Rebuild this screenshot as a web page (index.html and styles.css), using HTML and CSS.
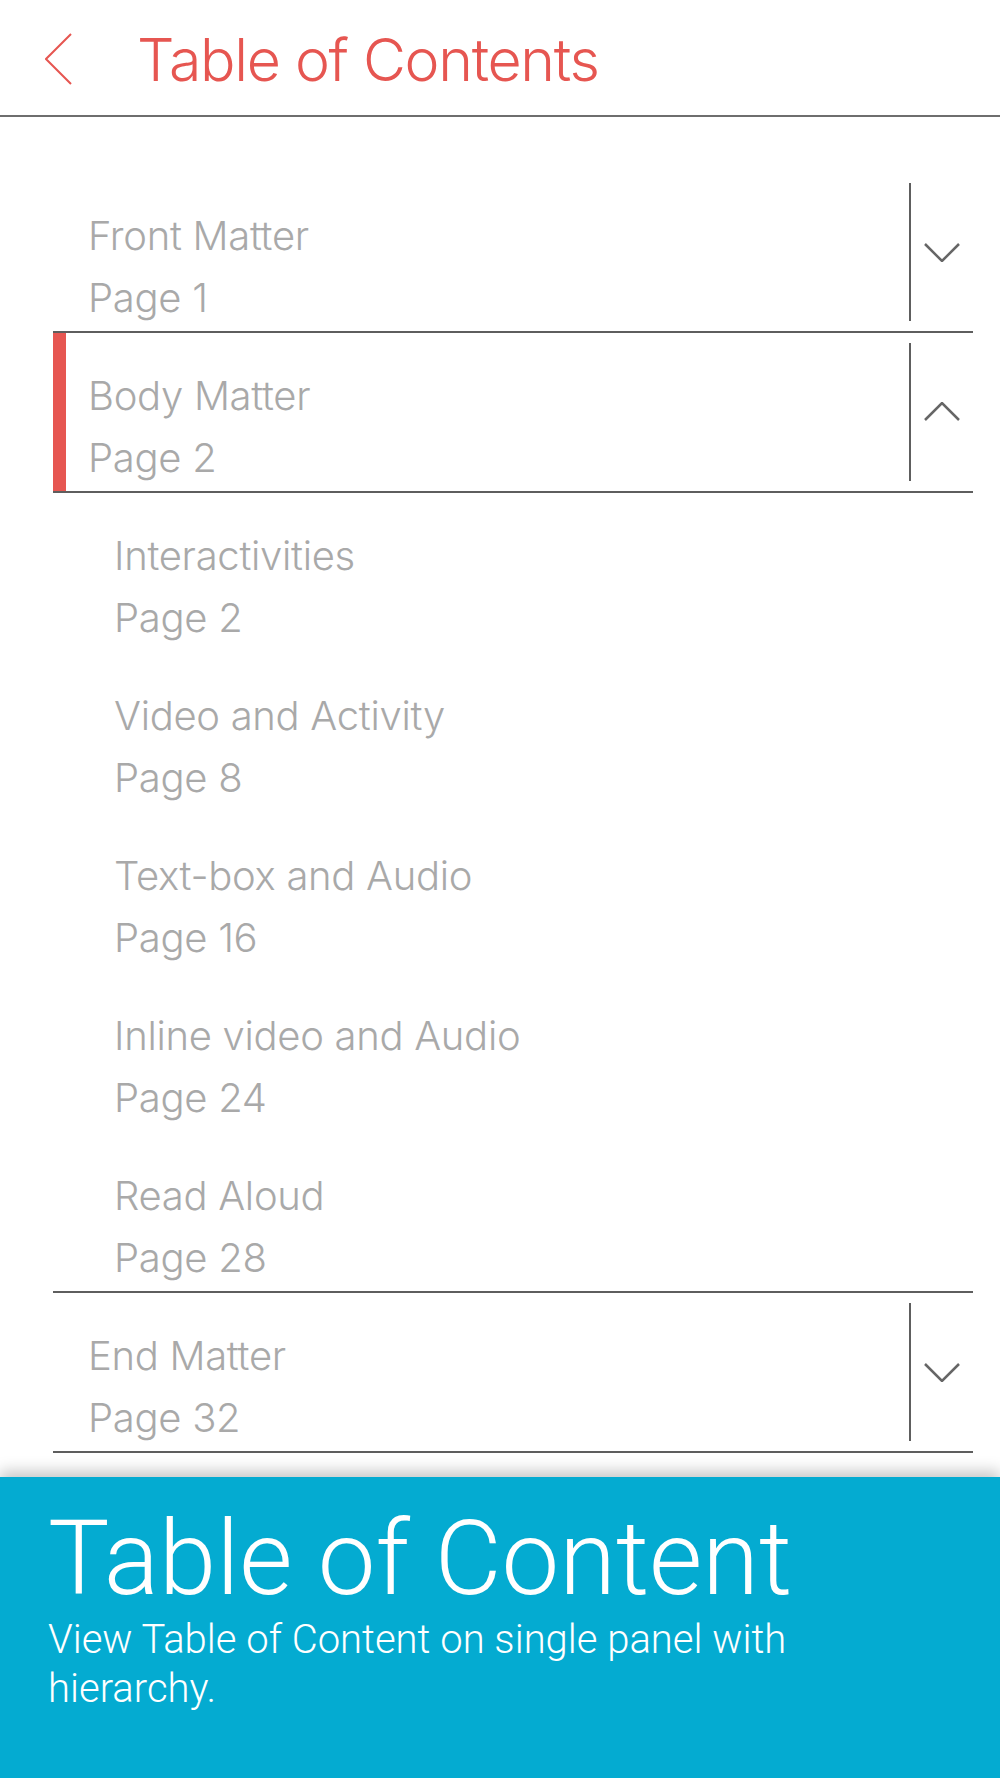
FILE: index.html
```html
<!DOCTYPE html>
<html>

<head>
    <title>Table of Contents</title>
    <meta charset="utf-8">
    <meta name="viewport" content="width=device-width, initial-scale=1.0">
    <link rel="stylesheet" href="styles.css">
</head>

<body>
    <header class="topbar">
        <svg class="tilbage" width="28" height="52" viewBox="0 0 28 52">
            <polyline points="26,1 1,26 26,51" />
        </svg>
        <h1>Table of Contents</h1>
    </header>

    <section class="toc">
        <div class="raekke">
            <div class="tekst">
                <p>Front Matter</p>
                <p>Page 1</p>
            </div>
            <button class="fold">
                <svg width="36" height="20" viewBox="0 0 36 20"><polyline points="1,2 18,19 35,2" /></svg>
            </button>
        </div>

        <div class="raekke aktiv">
            <div class="tekst">
                <p>Body Matter</p>
                <p>Page 2</p>
            </div>
            <button class="fold">
                <svg width="36" height="20" viewBox="0 0 36 20"><polyline points="1,18 18,1 35,18" /></svg>
            </button>
        </div>

        <ul class="under">
            <li>
                <p>Interactivities</p>
                <p>Page 2</p>
            </li>
            <li>
                <p>Video and Activity</p>
                <p>Page 8</p>
            </li>
            <li>
                <p>Text-box and Audio</p>
                <p>Page 16</p>
            </li>
            <li>
                <p>Inline video and Audio</p>
                <p>Page 24</p>
            </li>
            <li>
                <p>Read Aloud</p>
                <p>Page 28</p>
            </li>
        </ul>

        <div class="raekke">
            <div class="tekst">
                <p>End Matter</p>
                <p>Page 32</p>
            </div>
            <button class="fold">
                <svg width="36" height="20" viewBox="0 0 36 20"><polyline points="1,2 18,19 35,2" /></svg>
            </button>
        </div>
    </section>

    <footer class="info">
        <h2>Table of Content</h2>
        <p>View Table of Content on single panel with hierarchy.</p>
    </footer>
</body></html>
```

FILE: styles.css
```css
body {
    margin: 0;
    background: white;
    font-family: Inter, "Liberation Sans", Arial, sans-serif;
    font-weight: 300;
}

p {
    margin: 0;
}

.topbar {
    display: flex;
    align-items: flex-start;
    height: 117px;
    box-sizing: border-box;
    padding-top: 30px;
    border-bottom: 2px solid #6e6e6e;
}

.tilbage {
    margin-top: 3px;
    margin-left: 45px;
}

.tilbage polyline {
    fill: none;
    stroke: #e65651;
    stroke-width: 2;
}

h1 {
    margin: 0 0 0 64px;
    font-size: 59px;
    line-height: 60px;
    font-weight: 300;
    letter-spacing: -1.3px;
    color: #e65651;
}

.toc {
    margin: 56px 27px 0 53px;
}

.raekke {
    display: flex;
    align-items: center;
    height: 160px;
    box-sizing: border-box;
    border-bottom: 2px solid #5e5e5e;
}

.aktiv {
    box-shadow: inset 13px 0 #e65651;
}

.tekst {
    flex: 1;
    align-self: stretch;
    padding: 32px 0 0 35px;
}

.tekst p,
.under p {
    font-size: 40px;
    line-height: 62px;
    letter-spacing: -0.3px;
    color: #a9a9a9;
}

.fold {
    display: flex;
    align-items: center;
    justify-content: center;
    width: 64px;
    height: 138px;
    padding: 0;
    background: none;
    border: none;
    border-left: 2px solid #5e5e5e;
}

.fold polyline {
    fill: none;
    stroke: #666;
    stroke-width: 2.5;
}

.under {
    list-style: none;
    margin: 0;
    padding: 0;
    border-bottom: 2px solid #5e5e5e;
}

.under li {
    height: 160px;
    box-sizing: border-box;
    padding: 32px 0 0 61px;
}

.under li:last-child {
    height: 158px;
}

.info {
    margin-top: 24px;
    height: 301px;
    box-sizing: border-box;
    padding: 30px 20px 0 48px;
    background: #04abd1;
    color: white;
    font-family: Roboto, "Liberation Sans", sans-serif;
    font-weight: 300;
    box-shadow: 0 -6px 14px rgba(0, 0, 0, 0.22);
}

.info h2 {
    margin: 0;
    font-size: 103px;
    line-height: 103px;
    font-weight: 300;
}

.info p {
    margin-top: 5px;
    max-width: 800px;
    font-size: 40px;
    line-height: 49px;
}
```
